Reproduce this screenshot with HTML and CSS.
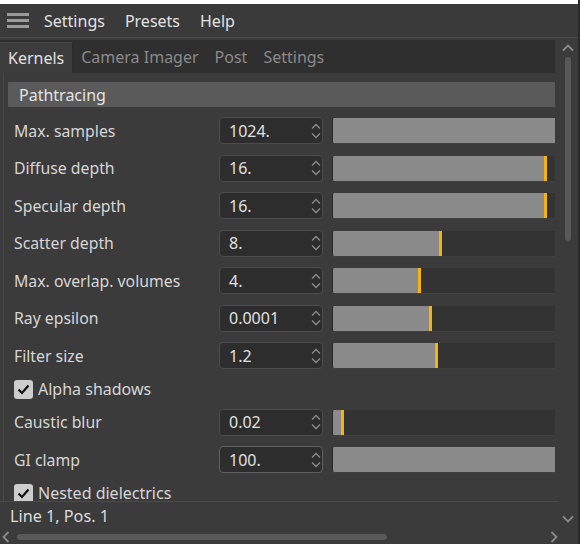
FILE: index.html
```html
<!DOCTYPE html>
<html>
<head>
<meta charset="utf-8">
<link rel="stylesheet" href="styles.css">
</head>
<body>
<div class="app">
  <div class="topstrip"></div>
  <div class="menubar">
    <svg class="hamburger" width="22" height="16" viewBox="0 0 22 16"><rect x="0" y="0" width="22" height="3" fill="#9a9a9a"/><rect x="0" y="6" width="22" height="3" fill="#9a9a9a"/><rect x="0" y="12" width="22" height="3" fill="#9a9a9a"/></svg>
    <span class="menu-item">Settings</span>
    <span class="menu-item">Presets</span>
    <span class="menu-item">Help</span>
  </div>
  <div class="main">
    <div class="left">
      <div class="tabs">
        <div class="tab active">Kernels</div>
        <div class="tab">Camera Imager</div>
        <div class="tab">Post</div>
        <div class="tab">Settings</div>
      </div>
      <div class="panel">
        <div class="section-header">Pathtracing</div>
        <div class="rows">
          <div class="row">
            <div class="label">Max. samples</div>
            <div class="field"><span class="val">1024.</span><svg class="spin" width="10" height="16" viewBox="0 0 10 16"><path d="M1 5.5 L5 1.5 L9 5.5 M1 10.5 L5 14.5 L9 10.5" fill="none" stroke="#8c8c8c" stroke-width="1.3"/></svg></div>
            <div class="slider"><div class="fill" style="width:223px"></div></div>
          </div>
          <div class="row">
            <div class="label">Diffuse depth</div>
            <div class="field"><span class="val">16.</span><svg class="spin" width="10" height="16" viewBox="0 0 10 16"><path d="M1 5.5 L5 1.5 L9 5.5 M1 10.5 L5 14.5 L9 10.5" fill="none" stroke="#8c8c8c" stroke-width="1.3"/></svg></div>
            <div class="slider"><div class="fill" style="width:211px"></div><div class="handle"></div></div>
          </div>
          <div class="row">
            <div class="label">Specular depth</div>
            <div class="field"><span class="val">16.</span><svg class="spin" width="10" height="16" viewBox="0 0 10 16"><path d="M1 5.5 L5 1.5 L9 5.5 M1 10.5 L5 14.5 L9 10.5" fill="none" stroke="#8c8c8c" stroke-width="1.3"/></svg></div>
            <div class="slider"><div class="fill" style="width:211px"></div><div class="handle"></div></div>
          </div>
          <div class="row">
            <div class="label">Scatter depth</div>
            <div class="field"><span class="val">8.</span><svg class="spin" width="10" height="16" viewBox="0 0 10 16"><path d="M1 5.5 L5 1.5 L9 5.5 M1 10.5 L5 14.5 L9 10.5" fill="none" stroke="#8c8c8c" stroke-width="1.3"/></svg></div>
            <div class="slider"><div class="fill" style="width:106px"></div><div class="handle"></div></div>
          </div>
          <div class="row">
            <div class="label">Max. overlap. volumes</div>
            <div class="field"><span class="val">4.</span><svg class="spin" width="10" height="16" viewBox="0 0 10 16"><path d="M1 5.5 L5 1.5 L9 5.5 M1 10.5 L5 14.5 L9 10.5" fill="none" stroke="#8c8c8c" stroke-width="1.3"/></svg></div>
            <div class="slider"><div class="fill" style="width:85px"></div><div class="handle"></div></div>
          </div>
          <div class="row">
            <div class="label">Ray epsilon</div>
            <div class="field"><span class="val">0.0001</span><svg class="spin" width="10" height="16" viewBox="0 0 10 16"><path d="M1 5.5 L5 1.5 L9 5.5 M1 10.5 L5 14.5 L9 10.5" fill="none" stroke="#8c8c8c" stroke-width="1.3"/></svg></div>
            <div class="slider"><div class="fill" style="width:96px"></div><div class="handle"></div></div>
          </div>
          <div class="row">
            <div class="label">Filter size</div>
            <div class="field"><span class="val">1.2</span><svg class="spin" width="10" height="16" viewBox="0 0 10 16"><path d="M1 5.5 L5 1.5 L9 5.5 M1 10.5 L5 14.5 L9 10.5" fill="none" stroke="#8c8c8c" stroke-width="1.3"/></svg></div>
            <div class="slider"><div class="fill" style="width:102px"></div><div class="handle"></div></div>
          </div>
          <div class="check-row">
            <span class="checkbox"><svg width="19" height="19" viewBox="0 0 19 19"><path d="M4.5 9.5 L8 13 L14.5 5.5" fill="none" stroke="#111" stroke-width="2.2"/></svg></span>
            <span class="check-label">Alpha shadows</span>
          </div>
          <div class="row">
            <div class="label">Caustic blur</div>
            <div class="field"><span class="val">0.02</span><svg class="spin" width="10" height="16" viewBox="0 0 10 16"><path d="M1 5.5 L5 1.5 L9 5.5 M1 10.5 L5 14.5 L9 10.5" fill="none" stroke="#8c8c8c" stroke-width="1.3"/></svg></div>
            <div class="slider"><div class="fill" style="width:8px"></div><div class="handle"></div></div>
          </div>
          <div class="row">
            <div class="label">GI clamp</div>
            <div class="field focused"><span class="val">100.</span><svg class="spin" width="10" height="16" viewBox="0 0 10 16"><path d="M1 5.5 L5 1.5 L9 5.5 M1 10.5 L5 14.5 L9 10.5" fill="none" stroke="#8c8c8c" stroke-width="1.3"/></svg></div>
            <div class="slider"><div class="fill" style="width:223px"></div></div>
          </div>
          <div class="check-row">
            <span class="checkbox"><svg width="19" height="19" viewBox="0 0 19 19"><path d="M4.5 9.5 L8 13 L14.5 5.5" fill="none" stroke="#111" stroke-width="2.2"/></svg></span>
            <span class="check-label">Nested dielectrics</span>
          </div>
        </div>
      </div>
      <div class="status">Line 1, Pos. 1</div>
    </div>
    <div class="vscroll">
      <svg class="chev" width="12" height="8" viewBox="0 0 12 8"><path d="M1 6.5 L6 1.5 L11 6.5" fill="none" stroke="#8a8a8a" stroke-width="1.8"/></svg>
      <div class="vtrack"><div class="vthumb"></div></div>
      <svg class="chev down" width="12" height="8" viewBox="0 0 12 8"><path d="M1 1.5 L6 6.5 L11 1.5" fill="none" stroke="#8a8a8a" stroke-width="1.8"/></svg>
    </div>
  </div>
  <div class="hscroll">
    <svg class="hchev" width="8" height="12" viewBox="0 0 8 12"><path d="M6.5 1 L1.5 6 L6.5 11" fill="none" stroke="#8a8a8a" stroke-width="1.8"/></svg>
    <div class="htrack"><div class="hthumb"></div></div>
    <svg class="hchev" width="8" height="12" viewBox="0 0 8 12"><path d="M1.5 1 L6.5 6 L1.5 11" fill="none" stroke="#8a8a8a" stroke-width="1.8"/></svg>
  </div>
</div>
</body>
</html>
```

FILE: styles.css
```css
* { box-sizing: border-box; }
html, body {
  margin: 0;
  padding: 0;
  background: #3b3b3b;
}
body {
  font-family: "Noto Sans", "Open Sans", sans-serif;
  font-size: 15.8px;
  color: #d6d6d6;
  overflow: hidden;
}
.app {
  width: 580px;
  height: 544px;
  display: flex;
  flex-direction: column;
  background: #3b3b3b;
  border-right: 2px solid #2a2a2a;
  overflow: hidden;
}
.topstrip {
  height: 4px;
  background: #ffffff;
  flex: none;
}
.menubar {
  height: 34px;
  flex: none;
  display: flex;
  align-items: center;
  padding-left: 7px;
  border-bottom: 1px solid #4a4a4a;
  background: #3a3a3a;
}
.hamburger { display: block; margin-right: 15px; margin-top: 1px; }
.menu-item {
  font-size: 16px;
  color: #e2e2e2;
  margin-right: 20px;
  line-height: 20px;
}
.main {
  flex: 1;
  display: flex;
  min-height: 0;
}
.left {
  width: 558px;
  display: flex;
  flex-direction: column;
  padding-top: 2px;
}
.tabs {
  height: 33px;
  flex: none;
  display: flex;
  background: #2f2f2f;
  margin-right: 3px;
}
.tab {
  padding: 0 8px;
  display: flex;
  align-items: center;
  color: #8a8a8a;
  font-size: 16px;
  padding-top: 1px;
}
.tab.active {
  background: #3c3c3c;
  color: #e0e0e0;
  margin-top: 2px;
  border-top: 1px solid #444;
  border-right: 1px solid #2a2a2a;
  padding-top: 0;
}
.panel {
  flex: 1;
  min-height: 0;
  overflow: hidden;
  margin-left: 3px;
  border-left: 1px solid #474747;
  padding: 9px 3px 0 4px;
}
.section-header {
  height: 25px;
  background: #5a5a5a;
  color: #e4e4e4;
  font-size: 16px;
  display: flex;
  align-items: center;
  padding-left: 11px;
  margin-bottom: 5px;
  border-radius: 1px;
}
.rows {
  display: flex;
  flex-direction: column;
}
.row {
  height: 37.5px;
  display: grid;
  grid-template-columns: 202px 104px 223px;
  column-gap: 9px;
  align-items: center;
  flex: none;
}
.label {
  padding-left: 6px;
  color: #d6d6d6;
  white-space: nowrap;
}
.field {
  height: 27px;
  background: #2d2d2d;
  border: 1px solid #4c4c4c;
  border-radius: 4px;
  display: flex;
  align-items: center;
  justify-content: space-between;
  padding: 0 0 0 9px;
  color: #e0e0e0;
  font-size: 16px;
}
.field.focused { border-color: #606060; }
.spin { display: block; margin-right: 1px; }
.slider {
  height: 25px;
  background: #333333;
  border-left: 1px solid #2a2a2a;
  border-radius: 2px 0 0 2px;
  display: flex;
  overflow: hidden;
  box-shadow: 0 1px 0 #414141;
}
.fill {
  background: #8a8a8a;
  height: 100%;
  flex: none;
}
.handle {
  width: 3px;
  height: 100%;
  background: #f5b30d;
  flex: none;
}
.check-row {
  height: 29px;
  display: flex;
  align-items: center;
  padding-left: 6px;
  flex: none;
}
.checkbox {
  width: 19px;
  height: 19px;
  background: #cdcdcd;
  border-radius: 3px;
  display: block;
  margin-right: 5px;
}
.checkbox svg { display: block; }
.check-label { color: #d6d6d6; font-size: 16px; }
.status {
  height: 29px;
  flex: none;
  border-top: 1px solid #4a4a4a;
  display: flex;
  align-items: center;
  padding-left: 10px;
  color: #dcdcdc;
  margin-right: 1px;
  font-size: 16.2px;
}
.vscroll {
  width: 20px;
  display: flex;
  flex-direction: column;
  align-items: center;
  padding-top: 6px;
  padding-bottom: 7px;
}
.chev { display: block; flex: none; }
.vtrack {
  flex: 1;
  width: 6px;
  margin-top: 5px;
  display: flex;
  flex-direction: column;
}
.vthumb {
  height: 184px;
  width: 6px;
  background: #595959;
  border-radius: 3px;
}
.hscroll {
  height: 14px;
  flex: none;
  display: flex;
  align-items: center;
  padding-left: 2px;
}
.hchev { display: block; flex: none; }
.htrack {
  width: 528px;
  margin: 0 5px 0 7px;
  display: flex;
}
.hthumb {
  width: 370px;
  height: 6px;
  background: #595959;
  border-radius: 3px;
}
```
